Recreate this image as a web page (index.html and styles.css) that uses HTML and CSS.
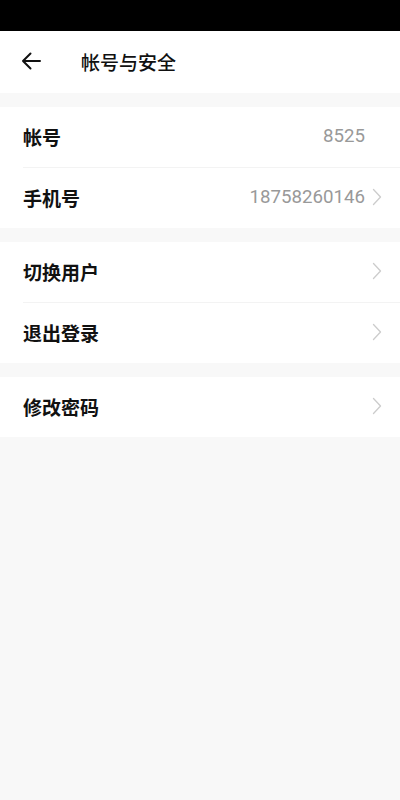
FILE: index.html
```html
<!DOCTYPE html>
<html lang="zh">
<head>
<meta charset="utf-8">
<link rel="stylesheet" href="styles.css">
</head>
<body>
<div class="status"></div>
<header class="nav">
  <svg class="back" width="20" height="18" viewBox="0 0 20 18"><path d="M19 9H2M9.5 1.5L2 9l7.5 7.5" fill="none" stroke="#111" stroke-width="2" stroke-linecap="round" stroke-linejoin="round"/></svg>
  <span class="title">帐号与安全</span>
</header>
<section class="group">
  <div class="row"><span class="label">帐号</span><span class="value">8525</span><span class="chev-space"></span></div>
  <div class="row"><span class="label">手机号</span><span class="value">18758260146</span><svg class="chev" width="10" height="18" viewBox="0 0 10 18"><path d="M1.5 1.5L8.5 9l-7 7.5" fill="none" stroke="#ccc" stroke-width="1.3" stroke-linecap="round" stroke-linejoin="round"/></svg></div>
</section>
<section class="group">
  <div class="row"><span class="label">切换用户</span><svg class="chev" width="10" height="18" viewBox="0 0 10 18"><path d="M1.5 1.5L8.5 9l-7 7.5" fill="none" stroke="#ccc" stroke-width="1.3" stroke-linecap="round" stroke-linejoin="round"/></svg></div>
  <div class="row"><span class="label">退出登录</span><svg class="chev" width="10" height="18" viewBox="0 0 10 18"><path d="M1.5 1.5L8.5 9l-7 7.5" fill="none" stroke="#ccc" stroke-width="1.3" stroke-linecap="round" stroke-linejoin="round"/></svg></div>
</section>
<section class="group">
  <div class="row"><span class="label">修改密码</span><svg class="chev" width="10" height="18" viewBox="0 0 10 18"><path d="M1.5 1.5L8.5 9l-7 7.5" fill="none" stroke="#ccc" stroke-width="1.3" stroke-linecap="round" stroke-linejoin="round"/></svg></div>
</section>
</body>
</html>
```
FILE: styles.css
```css
html, body { margin: 0; padding: 0; }
body {
  background: #f8f8f8;
  font-family: "Noto Sans CJK SC", "Noto Sans", sans-serif;
  min-height: 800px;
}
.status { height: 31px; background: #000; }
.nav {
  height: 62px;
  background: #fff;
  display: flex;
  align-items: center;
  padding-left: 21px;
  padding-bottom: 2px;
  box-sizing: border-box;
}
.back { display: block; }
.title {
  margin-left: 40px;
  font-size: 19px;
  font-weight: 500;
  color: #111;
}
.group {
  background: #fff;
  margin-top: 14px;
  padding-left: 23px;
}
.row {
  height: 60px;
  display: flex;
  align-items: center;
  padding-right: 18px;
  padding-bottom: 2px;
  box-sizing: border-box;
  border-bottom: 1px solid #f3f3f3;
  height: 61px;
}
.row:last-child { border-bottom: none; height: 60px; }
.label {
  font-size: 19px;
  font-weight: 700;
  color: #111;
  flex: 1;
}
.value {
  font-size: 18.7px;
  color: #999;
  font-family: "Roboto", "Noto Sans", sans-serif;
}
.chev { display: block; margin-left: 7px; }
.chev-space { width: 17px; }
```
